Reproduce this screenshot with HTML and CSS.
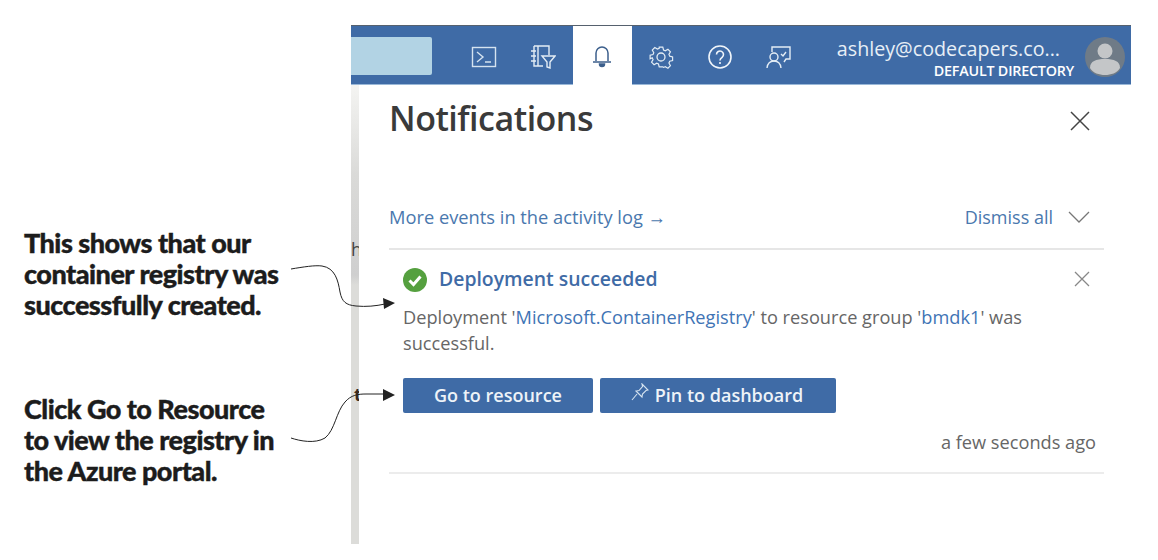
FILE: index.html
```html
<!DOCTYPE html>
<html>
  <head>
    <title>Notifications</title>
    <meta charset="UTF-8">
    <link rel="stylesheet" href="styles.css">
  </head>
  <body>
    <div class="notes">
      <p class="note note-first">This shows that our container registry was successfully created.</p>
      <p class="note note-second">Click Go to Resource to view the registry in the Azure portal.</p>
    </div>

    <div class="portal">
      <div class="topbar">
        <div class="search"></div>
        <div class="tools">
          <div class="tool">
            <svg width="26" height="24" viewBox="0 0 26 24" fill="none" stroke="#d5e3f0" stroke-width="1.4">
              <rect x="1.5" y="2.5" width="23" height="19"/>
              <path d="M6 7l6 5-6 5M14 17h6"/>
            </svg>
          </div>
          <div class="tool">
            <svg width="26" height="26" viewBox="0 0 26 26" fill="none" stroke="#e4edf5" stroke-width="1.4">
              <path d="M4 2h15v9M4 2v20h9M8 2v20M1 7h5M1 12h5M1 17h5"/>
              <path d="M12 12h13l-5 6v6l-3-1v-5z"/>
            </svg>
          </div>
          <div class="tool tool-active">
            <svg width="22" height="24" viewBox="0 0 22 24" fill="none" stroke="#3c5f8c" stroke-width="1.5">
              <path d="M5 17V9a6 6 0 0 1 12 0v8M2 18h18"/>
              <path d="M8.5 20a2.5 2.5 0 0 0 5 0z" fill="#3c5f8c"/>
            </svg>
          </div>
          <div class="tool">
            <svg width="26" height="26" viewBox="0 0 26 26" fill="none" stroke="#e4edf5" stroke-width="1.3">
              <circle cx="13" cy="13" r="4"/>
              <path d="M11 2h4l.8 3.2 2 .9 2.9-1.7 2.8 2.8-1.7 2.9.9 2 3.2.8v4l-3.2.8-.9 2 1.7 2.9-2.8 2.8-2.9-1.7-2 .9L15 24h-4l-.8-3.2-2-.9-2.9 1.7-2.8-2.8 1.7-2.9-.9-2L.9 15v-4l3.2-.8.9-2-1.7-2.9 2.8-2.8 2.9 1.7 2-.9z" transform="translate(1.3 1.3) scale(.9)"/>
            </svg>
          </div>
          <div class="tool">
            <svg width="26" height="26" viewBox="0 0 26 26" fill="none" stroke="#f0f5fa" stroke-width="1.6">
              <circle cx="13" cy="13" r="11"/>
              <path d="M9.5 10.5a3.5 3.5 0 1 1 5.6 2.8c-1.3 1-2.1 1.6-2.1 3.2"/>
              <path d="M13 18v2"/>
            </svg>
          </div>
          <div class="tool">
            <svg width="26" height="26" viewBox="0 0 26 26" fill="none" stroke="#e4edf5" stroke-width="1.4">
              <path d="M6 8V3h18v12h-4l-2 3"/>
              <path d="M15 10l2 2 3-4"/>
              <circle cx="8" cy="13" r="4"/>
              <path d="M1 24c.5-4 3-7 7-7s6.500 3 7 7"/>
            </svg>
          </div>
        </div>
        <div class="account">
          <div class="email">ashley@codecapers.co...</div>
          <div class="directory">DEFAULT DIRECTORY</div>
        </div>
        <div class="avatar">
          <svg width="40" height="40" viewBox="0 0 40 40">
            <circle cx="20" cy="20" r="20" fill="#6f7b87"/>
            <circle cx="20" cy="14" r="7.500" fill="#c4c6c8"/>
            <path d="M5 31c0-7 6-9 15-9s15 2 15 9c-3 5-9 7-15 7s-12-2-15-7z" fill="#c4c6c8"/>
          </svg>
        </div>
      </div>

      <div class="content">
        <div class="backdrop">
          <span class="cut cut-h">h</span>
          <span class="cut cut-t">t</span>
        </div>
        <div class="panel">
          <div class="panel-head">
            <h1>Notifications</h1>
            <svg class="close" width="20" height="20" viewBox="0 0 20 20" stroke="#444" stroke-width="1.5">
              <path d="M1 1l18 18M19 1L1 19"/>
            </svg>
          </div>
          <div class="actions">
            <a class="log">More events in the activity log &#8594;</a>
            <a class="dismiss">Dismiss all</a>
            <svg width="22" height="12" viewBox="0 0 22 12" fill="none" stroke="#777" stroke-width="1.3">
              <path d="M1 1l10 10L21 1"/>
            </svg>
          </div>
          <div class="item">
            <div class="item-title">
              <svg width="24" height="24" viewBox="0 0 24 24">
                <circle cx="12" cy="12" r="12" fill="#55a03f"/>
                <path d="M6.500 12.500l4 4 7-8" fill="none" stroke="#fff" stroke-width="3"/>
              </svg>
              <span class="title-text">Deployment succeeded</span>
              <svg class="item-close" width="16" height="16" viewBox="0 0 16 16" stroke="#888" stroke-width="1.3">
                <path d="M1 1l14 14M15 1L1 15"/>
              </svg>
            </div>
            <p class="message">Deployment '<a>Microsoft.ContainerRegistry</a>' to resource group '<a>bmdk1</a>' was successful.</p>
            <div class="buttons">
              <button class="btn btn-go">Go to resource</button>
              <button class="btn btn-pin">
                <svg class="pin" width="18" height="18" viewBox="0 0 18 18" fill="none" stroke="#d5e3f0" stroke-width="1.1">
                  <path d="M11 1l6 6-2 .5-3.500 3.500-.5 3-6-6 3-.5L11.500 3.500z"/>
                  <path d="M6 11l-5 6"/>
                </svg>
                Pin to dashboard
              </button>
            </div>
            <div class="time">a few seconds ago</div>
          </div>
        </div>
      </div>
    </div>

    <svg class="arrows" width="420" height="560" viewBox="0 0 420 560" fill="none" stroke="#222" stroke-width="1">
      <path d="M291 269C303 267 315 265 322 266C335 268 338 280 340 292C342 302 346 305 356 306C366 307 376 306 385 304"/>
      <path d="M291 438C300 441 315 444 325 438C335 430 336 412 345 402C351 395 358 394 366 394L385 394"/>
      <path d="M383 298l12 5-11 6z" fill="#222" stroke="none"/>
      <path d="M383 389l12 6-12 6z" fill="#222" stroke="none"/>
    </svg>
  </body>
</html>
```

FILE: styles.css
```css
html, body {
  height: 100%;
}
body {
  margin: 0;
  background-color: white;
  display: flex;
  overflow: hidden;
  font-family: 'Open Sans', sans-serif;
}
p {
  margin: 0;
}
.notes {
  width: 351px;
  flex: none;
  box-sizing: border-box;
  padding: 227px 0 0 24px;
}
.note {
  width: 262px;
  color: #1c1c1c;
  font-family: Lato, sans-serif;
  font-size: 27px;
  font-weight: 900;
  line-height: 31px;
  letter-spacing: -0.5px;
  -webkit-text-stroke: 0.4px #1c1c1c;
}
.note-second {
  margin-top: 73px;
}
.portal {
  width: 780px;
  flex: none;
  margin-top: 25px;
  display: flex;
  flex-direction: column;
}
.topbar {
  height: 60px;
  box-sizing: border-box;
  border-top: 1px solid #56616e;
  border-bottom: 1px solid #9ab8d8;
  background-color: #3f6ba6;
  display: flex;
  align-items: stretch;
}
.search {
  width: 81px;
  height: 38px;
  margin: 11px 23px 0 0;
  background-color: #b2d3e4;
  border-radius: 0 2px 2px 0;
}
.tools {
  display: flex;
}
.tool {
  width: 59px;
  box-sizing: border-box;
  padding: 3px 2px 0 0;
  display: flex;
  align-items: center;
  justify-content: center;
}
.tool-active {
  margin-bottom: -1px;
  padding-top: 0;
  background-color: white;
}
.account {
  width: 265px;
  box-sizing: border-box;
  padding: 10px 0 0 0;
  text-align: right;
  color: white;
}
.email {
  padding-right: 14px;
  font-size: 19.700px;
  line-height: 26px;
  color: #e8eff6;
}
.directory {
  font-size: 14.300px;
  font-weight: 600;
  line-height: 18px;
  letter-spacing: -0.2px;
}
.avatar {
  margin: 11px 0 0 11px;
}
.content {
  display: flex;
  height: 459px;
}
.backdrop {
  width: 8px;
  position: relative;
  overflow: hidden;
  background-image: linear-gradient(to bottom, #f4f4f2 0, #dadad8 90px, #cfcfcf 190px, #dcdcd9 200px);
}
.cut {
  position: absolute;
  left: 0;
  color: #444;
  font-size: 18px;
}
.cut-h {
  top: 152px;
}
.cut-t {
  top: 297px;
  left: 3px;
  color: #3a2a20;
  font-weight: 700;
}
.panel {
  flex: 1;
  box-sizing: border-box;
  padding: 0 27px 0 30px;
}
.panel-head {
  height: 72px;
  display: flex;
  align-items: center;
  justify-content: space-between;
  padding-right: 14px;
}
h1 {
  margin: 0 0 6px 0;
  color: #3a3a3a;
  font-size: 34px;
  font-weight: 600;
  line-height: 1;
  letter-spacing: -0.5px;
}
.actions {
  margin-top: 44px;
  height: 49px;
  display: flex;
  align-items: center;
  box-sizing: border-box;
  padding: 0 14px 16px 0;
  border-bottom: 2px solid #e6e6e6;
  color: #4a78ae;
  font-size: 18.300px;
}
.log {
  flex: 1;
}
.dismiss {
  margin-right: 15px;
  font-size: 18px;
}
.item {
  padding: 18px 8px 0 14px;
  height: 224px;
  box-sizing: border-box;
  border-bottom: 2px solid #ececec;
}
.item-title {
  display: flex;
  align-items: center;
  height: 24px;
}
.title-text {
  flex: 1;
  margin: 0 0 3px 12px;
  color: #3f6ba6;
  font-size: 19.400px;
  font-weight: 600;
}
.item-close {
  margin: 0 6px 2px 0;
}
.message {
  margin-top: 12px;
  width: 660px;
  color: #666;
  font-size: 18.200px;
  line-height: 26px;
}
.message a {
  color: #3f74b5;
}
.buttons {
  display: flex;
  gap: 7px;
  margin-top: 22px;
}
.btn {
  height: 35px;
  border: none;
  border-radius: 2px;
  padding: 0 0 2px 0;
  background-color: #3f6ba6;
  color: #eef3f8;
  font-family: 'Open Sans', sans-serif;
  font-size: 18px;
  font-weight: 600;
  display: flex;
  align-items: center;
  justify-content: center;
  gap: 6px;
}
.btn-go {
  width: 190px;
}
.btn-pin {
  width: 236px;
}
.pin {
  margin: 0 0 5px -2px;
}
.time {
  margin-top: 17px;
  text-align: right;
  color: #666;
  font-size: 18.200px;
}
.arrows {
  position: absolute;
  left: 0;
  top: 0;
  pointer-events: none;
}
```
